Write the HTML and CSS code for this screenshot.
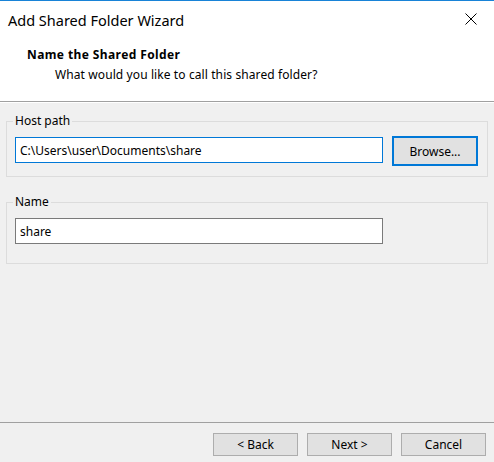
FILE: index.html
```html
<!DOCTYPE html>
<html lang="en">
<head>
  <meta charset="UTF-8">
  <title>Add Shared Folder Wizard</title>
  <link rel="stylesheet" href="styles.css">
</head>
<body>
  <div class="window">
    <div class="header">
      <div class="titlebar">
        <span class="title">Add Shared Folder Wizard</span>
        <button class="close" aria-label="Close">
          <svg width="12" height="12" viewBox="0 0 12 12">
            <path d="M0.5 0.5 L11.5 11.5 M11.5 0.5 L0.5 11.5" stroke="#000" stroke-width="1" fill="none"/>
          </svg>
        </button>
      </div>
      <h2 class="step-title">Name the Shared Folder</h2>
      <p class="step-desc">What would you like to call this shared folder?</p>
    </div>

    <div class="content">
      <fieldset class="group">
        <legend>Host path</legend>
        <div class="row">
          <input type="text" class="field focused" value="C:\Users\user\Documents\share">
          <button class="btn default">Browse...</button>
        </div>
      </fieldset>

      <fieldset class="group group-name">
        <legend>Name</legend>
        <div class="row">
          <input type="text" class="field" value="share">
        </div>
      </fieldset>
    </div>

    <div class="footer">
      <button class="btn">&lt; Back</button>
      <button class="btn">Next &gt;</button>
      <button class="btn">Cancel</button>
    </div>
  </div>
</body>
</html>
```

FILE: styles.css
```css
* {
  box-sizing: border-box;
}
body {
  margin: 0;
  font-family: "Noto Sans", "Open Sans", sans-serif;
  font-size: 12px;
  color: #000;
  background: #f0f0f0;
}
.window {
  width: 494px;
  height: 462px;
  display: flex;
  flex-direction: column;
  border-top: 1px solid #1883d7;
  background: #f0f0f0;
}
.header {
  background: #fff;
  height: 101px;
  border-bottom: 1px solid #a0a0a0;
}
.titlebar {
  display: flex;
  align-items: center;
  justify-content: space-between;
  height: 38px;
  padding-left: 8px;
}
.title {
  font-size: 14.5px;
}
.close {
  width: 46px;
  height: 30px;
  border: none;
  background: none;
  padding: 0;
  display: flex;
  align-items: center;
  justify-content: center;
  margin-top: -2px;
}
.step-title {
  margin: 7px 0 0 27px;
  font-size: 12px;
  font-weight: bold;
  letter-spacing: 0.4px;
  line-height: 18px;
}
.step-desc {
  margin: 2px 0 0 55px;
  letter-spacing: 0.1px;
  line-height: 18px;
}
.content {
  flex: 1;
  border-top: 1px solid #fff;
  padding: 10px 6px 0 6px;
}
.group {
  margin: 0;
  border: 1px solid #dcdcdc;
  padding: 7px 9px 10px 8px;
}
.group legend {
  padding: 0 2px;
  margin-left: -2px;
  line-height: 16px;
}
.group-name {
  margin-top: 17px;
  padding-bottom: 19px;
}
.row {
  display: flex;
  align-items: flex-start;
  gap: 9px;
}
.field {
  width: 368px;
  height: 26px;
  margin-top: 1px;
  border: 1px solid #7a7a7a;
  background: #fff;
  font: inherit;
  padding: 0 4px;
  outline: none;
}
.field.focused {
  border-color: #0078d7;
}
.btn {
  width: 85px;
  height: 23px;
  background: #e1e1e1;
  border: 1px solid #adadad;
  font: inherit;
  color: #000;
  padding: 0;
}
.btn.default {
  width: 86px;
  height: 30px;
  border: 2px solid #0078d7;
}
.footer {
  height: 40px;
  border-top: 1px solid #a0a0a0;
  display: flex;
  justify-content: flex-end;
  align-items: flex-start;
  gap: 9px;
  padding: 10px 8px 0 0;
}
```
